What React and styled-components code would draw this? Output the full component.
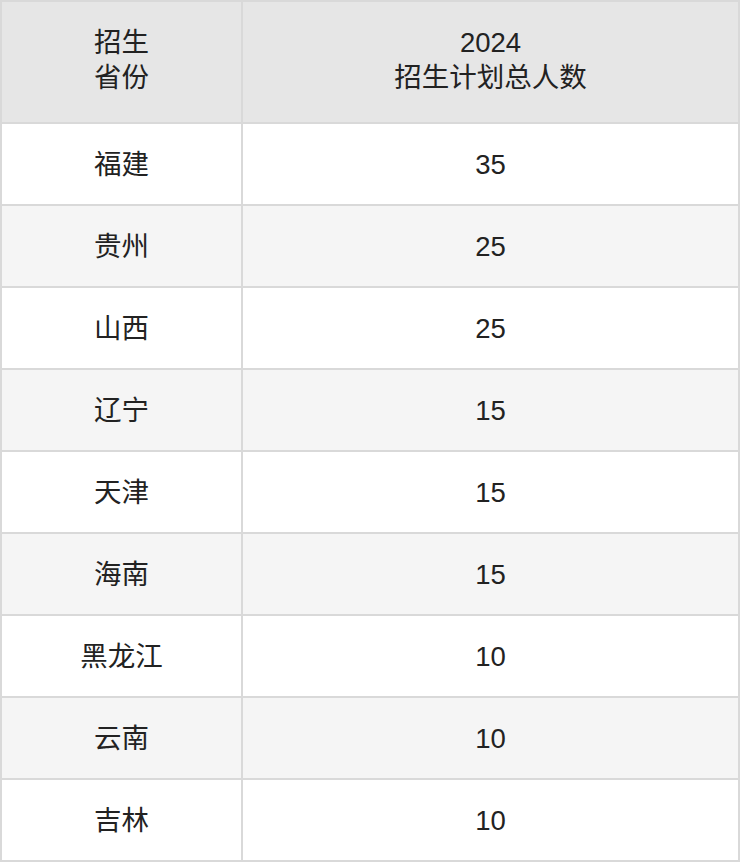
import React from "react";
import styled, { createGlobalStyle } from "styled-components";

const Global = createGlobalStyle`
  html, body { margin: 0; padding: 0; background: #fff; }
  body { font-family: "Liberation Sans", "Noto Sans CJK SC", sans-serif; }
`;

const Table = styled.div`
  display: grid;
  grid-template-columns: 239px 495px;
  grid-template-rows: 120px;
  grid-auto-rows: 80px;
  gap: 2px;
  padding: 2px;
  width: 740px;
  box-sizing: border-box;
  background: #d9d9d9;
`;

const Cell = styled.div`
  display: flex;
  align-items: center;
  justify-content: center;
  text-align: center;
  font-size: 27.5px;
  line-height: 35px;
  color: #222;
  background: ${(p) => (p.$head ? "#e6e6e6" : p.$alt ? "#f5f5f5" : "#fff")};
  padding-bottom: ${(p) => (p.$head ? "4px" : "0")};
  box-sizing: border-box;
`;

const rows = [
  ["福建", "35"],
  ["贵州", "25"],
  ["山西", "25"],
  ["辽宁", "15"],
  ["天津", "15"],
  ["海南", "15"],
  ["黑龙江", "10"],
  ["云南", "10"],
  ["吉林", "10"],
];

export default function App() {
  return (
    <>
      <Global />
      <Table>
        <Cell $head>
          招生
          <br />
          省份
        </Cell>
        <Cell $head>
          2024
          <br />
          招生计划总人数
        </Cell>
        {rows.map(([p, n], i) => (
          <React.Fragment key={p}>
            <Cell $alt={i % 2 === 1}>{p}</Cell>
            <Cell $alt={i % 2 === 1}>{n}</Cell>
          </React.Fragment>
        ))}
      </Table>
    </>
  );
}
